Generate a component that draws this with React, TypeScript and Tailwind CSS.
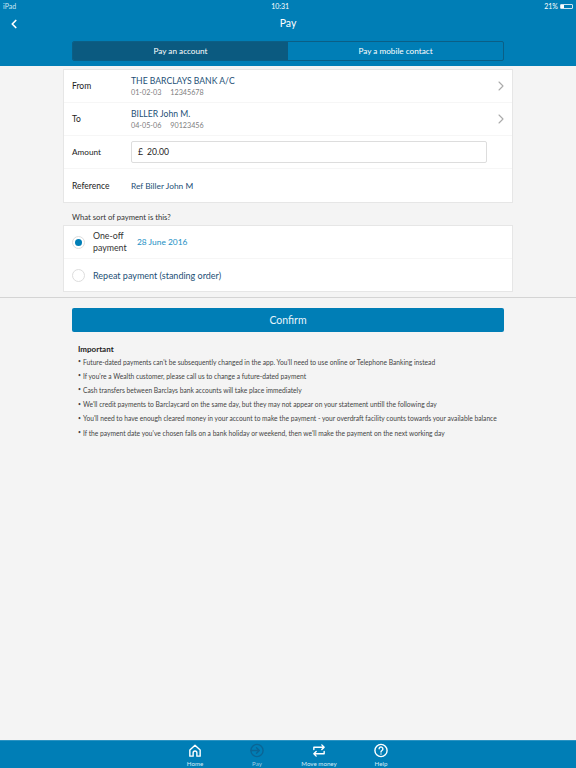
import { ChevronLeft, ChevronRight } from "lucide-react";

const notes = [
  "Future-dated payments can't be subsequently changed in the app. You'll need to use online or Telephone Banking instead",
  "If you're a Wealth customer, please call us to change a future-dated payment",
  "Cash transfers between Barclays bank accounts will take place immediately",
  "We'll credit payments to Barclaycard on the same day, but they may not appear on your statement untill the following day",
  "You'll need to have enough cleared money in your account to make the payment - your overdraft facility counts towards your available balance",
  "If the payment date you've chosen falls on a bank holiday or weekend, then we'll make the payment on the next working day",
];

const AccountRow = ({ label, name, sort, acc }: { label: string; name: string; sort: string; acc: string }) => (
  <div className="flex h-[33px] items-center border-b border-[#f6f6f6] pl-[8px] pr-[3px]">
    <div className="w-[59px] text-[8.5px] text-[#222]">{label}</div>
    <div className="flex-1">
      <div className="text-[8.6px] leading-[13px] text-[#1d4f76]">{name}</div>
      <div className="flex gap-[9px] text-[7.2px] leading-[10px] text-[#808080]">
        <span>{sort}</span>
        <span>{acc}</span>
      </div>
    </div>
    <ChevronRight size={16} strokeWidth={1.6} className="text-[#aaa]" />
  </div>
);

const NavItem = ({ label, dim, children }: { label: string; dim?: boolean; children: React.ReactNode }) => (
  <div className={`flex w-[62px] flex-col items-center ${dim ? "text-[#0a6595]" : "text-white"}`}>
    <svg width="16" height="16" viewBox="0 0 16 16" fill="none" stroke="currentColor" strokeWidth="1.5" strokeLinecap="round" strokeLinejoin="round">
      {children}
    </svg>
    <span className={`mt-[1px] text-[6.2px] leading-[9px] ${dim ? "text-[#9ccde4]" : "text-[#d5ecf6]"}`}>{label}</span>
  </div>
);

export default function App() {
  return (
    <div className="flex h-[768px] w-[576px] flex-col overflow-hidden bg-[#f4f4f4] font-['Lato',sans-serif]">
      <header className="h-[66px] shrink-0 bg-[#007eb6] text-white">
        <div className="flex h-[12px] items-center justify-between px-[3px] text-[7px] text-[#cfe8f3]">
          <span>iPad</span>
          <span className="text-white">10:31</span>
          <span className="flex items-center gap-[1px] text-white">
            21%
            <span className="ml-[1px] h-[5px] w-[13px] rounded-[1px] border border-white/80">
              <span className="block h-full w-[3px] bg-white" />
            </span>
          </span>
        </div>
        <div className="relative flex h-[23px] items-center justify-center text-[10.5px]">
          <ChevronLeft size={14} strokeWidth={3} className="absolute left-[7px]" />
          Pay
        </div>
        <div className="mx-[72px] mt-[6px] flex h-[20px] overflow-hidden rounded-[2px] border border-[#0b5f86] text-[8.2px]">
          <div className="flex w-[215px] items-center justify-center bg-[#0b5a80]">Pay an account</div>
          <div className="flex flex-1 items-center justify-center">Pay a mobile contact</div>
        </div>
      </header>

      <main className="flex-1">
        <div className="mx-[63px] mt-[3px] border border-[#e6e6e6] bg-white">
          <AccountRow label="From" name="THE BARCLAYS BANK A/C" sort="01-02-03" acc="12345678" />
          <AccountRow label="To" name="BILLER John M." sort="04-05-06" acc="90123456" />
          <div className="flex h-[33px] items-center border-b border-[#f6f6f6] pl-[8px]">
            <div className="w-[59px] pt-[1px] text-[8.2px] text-[#222]">Amount</div>
            <div className="flex h-[22px] w-[356px] items-center rounded-[2px] border border-[#ddd] pl-[6px] text-[8.6px] text-[#222]">
              <span className="w-[9px]">£</span>20.00
            </div>
          </div>
          <div className="flex h-[33px] items-center pl-[8px] pt-[1px]">
            <div className="w-[59px] text-[8.5px] text-[#222]">Reference</div>
            <div className="text-[8.4px] text-[#1d4f76]">Ref Biller John M</div>
          </div>
        </div>

        <div className="mx-[72px] mt-[8px] text-[7.7px] leading-[12px] text-[#333]">What sort of payment is this?</div>

        <div className="mx-[63px] mt-[2px] border border-[#e6e6e6] bg-white">
          <div className="flex h-[33px] items-center border-b border-[#f6f6f6] pl-[8px]">
            <span className="flex h-[13px] w-[13px] items-center justify-center rounded-full border border-[#ddd]">
              <span className="h-[7px] w-[7px] rounded-full bg-[#007eb6]" />
            </span>
            <div className="ml-[8px] w-[44px] text-[8.8px] leading-[12px] text-[#333]">One-off payment</div>
            <div className="text-[8.4px] text-[#1a8fc4]">28 June 2016</div>
          </div>
          <div className="flex h-[32px] items-center pl-[8px]">
            <span className="h-[13px] w-[13px] rounded-full border border-[#ddd]" />
            <div className="ml-[8px] pt-[1px] text-[9px] text-[#1d4f76]">Repeat payment (standing order)</div>
          </div>
        </div>

        <div className="mt-[5px] h-[1px] bg-[#d4d4d4]" />

        <button className="mx-[72px] mt-[10px] flex h-[24px] w-[432px] items-center justify-center rounded-[2px] bg-[#007eb6] pt-[1px] text-[10.5px] text-[#e8f5fb]">
          Confirm
        </button>

        <div className="mx-[78px] mt-[11px]">
          <div className="text-[8px] font-bold leading-[12px] text-[#222]">Important</div>
          <ul>
            {notes.map((n) => (
              <li key={n} className="flex h-[14.1px] items-center whitespace-nowrap text-[6.68px] text-[#444]">
                <span className="w-[5px] text-[5px]">•</span>
                {n}
              </li>
            ))}
          </ul>
        </div>
      </main>

      <footer className="flex h-[28px] shrink-0 justify-center gap-0 border-t border-[#2b93c2] bg-[#007eb6] pt-[2px]">
        <div className="flex">
          <NavItem label="Home">
            <path d="M2.5 7.5 8 2.5l5.5 5V14h-3.5v-3.5a2 2 0 0 0-4 0V14H2.5z" />
          </NavItem>
          <NavItem label="Pay" dim>
            <circle cx="8" cy="8" r="6.5" />
            <path d="M1.5 8H10M7.5 5l3 3-3 3" />
          </NavItem>
          <NavItem label="Move money">
            <path d="M2.5 7V4.5h11M11 2l2.5 2.5L11 7M13.5 9v2.5h-11M5 9l-2.5 2.5L5 14" />
          </NavItem>
          <NavItem label="Help">
            <circle cx="8" cy="8" r="6.5" />
            <path d="M6 6.2a2 2 0 1 1 3 1.8c-.7.4-1 .8-1 1.6M8 11.6v.1" />
          </NavItem>
        </div>
      </footer>
    </div>
  );
}
